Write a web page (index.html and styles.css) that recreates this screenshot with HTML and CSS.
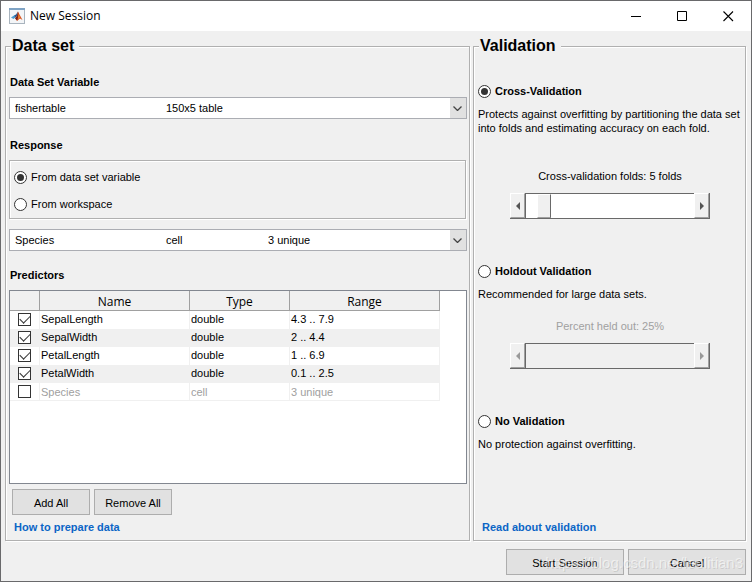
FILE: index.html
```
<!DOCTYPE html>
<html lang="en">
<head>
    <meta charset="UTF-8">
    <meta name="viewport" content="width=device-width, initial-scale=1.0">
    <title>New Session</title>
    <link rel="stylesheet" href="styles.css">
</head>
<body>
    <div class="window">
        <header class="titlebar">
            <svg class="logo" width="16" height="16" viewBox="0 0 16 16">
                <rect x="0.5" y="0.5" width="15" height="15" fill="#f3f5f7" stroke="#a9b4be"/>
                <rect x="0" y="0" width="16" height="2" fill="#7fa3c4"/>
                <path d="M2 9.5 L5 7.5 L7 9 L4.5 11 Z" fill="#4a9bd0"/>
                <path d="M5 7.5 L7 6.5 L9 3.5 L8 8 L6.5 9.5 Z" fill="#2a5b93"/>
                <path d="M9 3.5 L10.5 6.5 L13.5 12 L11 10.5 L8 13 L6.5 10 L8 8 Z" fill="#d9541e"/>
                <path d="M9 3.5 L8 8 L6 10.5 L8 12.5 L9.5 8 Z" fill="#7c2118"/>
                <path d="M9.5 6 L11 9.5 L9 11 Z" fill="#f08a2c"/>
            </svg>
            <h1>New Session</h1>
            <div class="window-btns">
                <button aria-label="Minimize"><svg width="11" height="11" viewBox="0 0 11 11"><path d="M0 5.5 H10" stroke="#000"/></svg></button>
                <button aria-label="Maximize"><svg width="11" height="11" viewBox="0 0 11 11"><path d="M0.5 0.5 H9.5 V9.5 H0.5 Z" fill="none" stroke="#000"/></svg></button>
                <button aria-label="Close"><svg width="11" height="11" viewBox="0 0 11 11"><path d="M0.5 0.5 L10 10 M10 0.5 L0.5 10" stroke="#000" stroke-width="1.1"/></svg></button>
            </div>
        </header>

        <main class="panels">
            <fieldset class="panel data-panel">
                <legend>Data set</legend>

                <label class="heading" for="variable">Data Set Variable</label>
                <div class="combo">
                    <select id="variable">
                        <option>fishertable</option>
                    </select>
                    <span class="combo-type">150x5 table</span>
                    <svg class="arrow" width="9" height="5" viewBox="0 0 9 5"><path d="M0.5 0.5 L4.5 4.5 L8.5 0.5" fill="none" stroke="#444" stroke-width="1.3"/></svg>
                </div>

                <label class="heading" for="response">Response</label>
                <div class="group">
                    <label><input type="radio" name="source" checked>From data set variable</label>
                    <label><input type="radio" name="source">From workspace</label>
                </div>
                <div class="combo">
                    <select id="response">
                        <option>Species</option>
                    </select>
                    <span class="combo-type">cell</span>
                    <span class="combo-range">3 unique</span>
                    <svg class="arrow" width="9" height="5" viewBox="0 0 9 5"><path d="M0.5 0.5 L4.5 4.5 L8.5 0.5" fill="none" stroke="#444" stroke-width="1.3"/></svg>
                </div>

                <h3 class="heading">Predictors</h3>
                <div class="table-box">
                    <table>
                        <thead>
                            <tr><th class="col-check"></th><th class="col-name">Name</th><th class="col-type">Type</th><th class="col-range">Range</th></tr>
                        </thead>
                        <tbody>
                            <tr><td><input type="checkbox" id="p1" checked></td><td><label for="p1">SepalLength</label></td><td>double</td><td>4.3 .. 7.9</td></tr>
                            <tr><td><input type="checkbox" id="p2" checked></td><td><label for="p2">SepalWidth</label></td><td>double</td><td>2 .. 4.4</td></tr>
                            <tr><td><input type="checkbox" id="p3" checked></td><td><label for="p3">PetalLength</label></td><td>double</td><td>1 .. 6.9</td></tr>
                            <tr><td><input type="checkbox" id="p4" checked></td><td><label for="p4">PetalWidth</label></td><td>double</td><td>0.1 .. 2.5</td></tr>
                            <tr class="off"><td><input type="checkbox" id="p5"></td><td><label for="p5">Species</label></td><td>cell</td><td>3 unique</td></tr>
                        </tbody>
                    </table>
                </div>
                <div class="btn-row">
                    <button class="btn">Add All</button>
                    <button class="btn">Remove All</button>
                </div>
                <a class="help" href="#">How to prepare data</a>
            </fieldset>

            <fieldset class="panel validation-panel">
                <legend>Validation</legend>

                <section class="method cross">
                    <label class="choice"><input type="radio" name="validation" checked>Cross-Validation</label>
                    <p>Protects against overfitting by partitioning the data set into folds and estimating accuracy on each fold.</p>
                    <label class="slider-label" for="folds">Cross-validation folds: 5 folds</label>
                    <div class="slider">
                        <button aria-label="Fewer folds"><svg width="4" height="8" viewBox="0 0 4 8"><path d="M4 0 V8 L0 4 Z" fill="#555"/></svg></button>
                        <input type="range" id="folds" min="2" max="45" value="5">
                        <button aria-label="More folds"><svg width="4" height="8" viewBox="0 0 4 8"><path d="M0 0 V8 L4 4 Z" fill="#555"/></svg></button>
                    </div>
                </section>

                <section class="method holdout">
                    <label class="choice"><input type="radio" name="validation">Holdout Validation</label>
                    <p>Recommended for large data sets.</p>
                    <label class="slider-label off" for="percent">Percent held out: 25%</label>
                    <div class="slider">
                        <button aria-label="Less" disabled><svg width="4" height="8" viewBox="0 0 4 8"><path d="M4 0 V8 L0 4 Z" fill="#999"/></svg></button>
                        <input type="range" id="percent" min="5" max="50" value="25" disabled>
                        <button aria-label="More" disabled><svg width="4" height="8" viewBox="0 0 4 8"><path d="M0 0 V8 L4 4 Z" fill="#999"/></svg></button>
                    </div>
                </section>

                <section class="method">
                    <label class="choice"><input type="radio" name="validation">No Validation</label>
                    <p>No protection against overfitting.</p>
                </section>

                <a class="help" href="#">Read about validation</a>
            </fieldset>
        </main>

        <footer>
            <button class="btn">Start Session</button>
            <button class="btn">Cancel</button>
            <span class="watermark">https://blog.csdn.net/leolitian3</span>
        </footer>
    </div>
</body>
</html>
```

FILE: styles.css
```
* {
    box-sizing: border-box;
}
body {
    margin: 0;
    font-family: "Liberation Sans", Arial, sans-serif;
    font-size: 11px;
    line-height: 14px;
    color: #000;
}
h1, h3, p {
    margin: 0;
}
button, select, input {
    font: inherit;
    color: inherit;
    margin: 0;
}
.window {
    display: flex;
    flex-direction: column;
    min-height: 100vh;
    border: 1px solid #69696b;
    background-color: #f0f0f0;
}

/* title bar */
.titlebar {
    display: flex;
    align-items: center;
    height: 30px;
    padding-left: 8px;
    background-color: #fff;
}
.titlebar h1 {
    margin-left: 5px;
    font: 12px/16px "Open Sans", sans-serif;
}
.window-btns {
    display: flex;
    margin-left: auto;
}
.window-btns button {
    display: flex;
    align-items: center;
    justify-content: center;
    width: 46px;
    height: 30px;
    padding: 0;
    border: none;
    background: none;
}

/* panels */
.panels {
    flex: 1;
    display: grid;
    grid-template-columns: 1fr 273px;
    gap: 3px;
    padding: 6px 5px 0 4px;
}
.panel {
    display: flex;
    flex-direction: column;
    min-width: 0;
    margin: 0;
    padding: 20px 2px 6px 3px;
    border: 1px solid #b0b0b0;
    box-shadow: 1px 1px 0 #fff, inset 1px 1px 0 #fff;
}
.panel legend {
    padding: 0 5px 0 1px;
    margin-left: 2px;
    font-size: 16px;
    font-weight: bold;
    line-height: 18px;
    background-color: #f0f0f0;
}
.heading {
    display: block;
    margin: 0 0 8px 1px;
    font-size: 11px;
    font-weight: bold;
}
.combo + label.heading {
    margin-top: 19px;
}
.combo + h3.heading {
    margin-top: 17px;
}

/* combo boxes */
.combo {
    display: grid;
    grid-template-columns: 157px 102px 1fr 17px;
    align-items: center;
    height: 22px;
}
.combo select {
    grid-area: 1 / 1 / 2 / -1;
    width: 100%;
    height: 22px;
    padding: 0 5px;
    appearance: none;
    border: 1px solid #abadb3;
    border-radius: 0;
    background: linear-gradient(#e1e1e1, #e1e1e1) right / 16px 100% no-repeat #fff;
}
.combo span, .arrow {
    grid-row: 1;
    z-index: 1;
    pointer-events: none;
}
.combo-type {
    grid-column: 2;
}
.combo-range {
    grid-column: 3;
}
.arrow {
    grid-column: 4;
    margin-left: 3px;
}

/* radios and check boxes */
input[type="radio"], input[type="checkbox"] {
    display: grid;
    place-content: center;
    flex: none;
    width: 13px;
    height: 13px;
    appearance: none;
    border: 1px solid #333;
    background-color: #fff;
}
input[type="radio"] {
    margin-right: 4px;
    border-radius: 50%;
}
input[type="radio"]:checked::before {
    content: "";
    width: 7px;
    height: 7px;
    border-radius: 50%;
    background-color: #333;
}
input[type="checkbox"]:checked::before {
    content: "";
    width: 9px;
    height: 5px;
    border: solid #333;
    border-width: 0 0 1px 1px;
    transform: translateY(-1px) rotate(-45deg);
}
.group {
    display: flex;
    flex-direction: column;
    gap: 13px;
    margin: 0 1px 10px 0;
    padding: 9px 4px 7px;
    border: 1px solid #b0b0b0;
    box-shadow: 1px 1px 0 #fff, inset 1px 1px 0 #fff;
}
.group label, .choice {
    display: flex;
    align-items: center;
}

/* predictors */
.table-box {
    flex: 1;
    border: 1px solid #828790;
    background-color: #fff;
}
table {
    width: 430px;
    table-layout: fixed;
    border-collapse: separate;
    border-spacing: 0;
}
th {
    height: 20px;
    padding: 2px 0 0;
    border-right: 1px solid #a0a0a0;
    border-bottom: 1px solid #a0a0a0;
    background-color: #f0f0f0;
    font: 12px/16px "Open Sans", sans-serif;
}
td {
    height: 18px;
    padding: 0 0 2px 1px;
    border-right: 1px solid #f0f0f0;
}
td input[type="checkbox"] {
    margin-left: 7px;
}
tbody tr:nth-child(even) {
    background-color: #f0f0f0;
}
.off {
    color: #a0a0a0;
}
.off td {
    padding-bottom: 0;
    border-bottom: 1px solid #f0f0f0;
}
.col-check {
    width: 30px;
}
.col-name, .col-range {
    width: 150px;
}
.col-type {
    width: 100px;
}

/* buttons and links */
.btn {
    height: 26px;
    padding: 2px 0 0;
    border: 1px solid #adadad;
    background-color: #e1e1e1;
}
.btn-row {
    display: flex;
    gap: 4px;
    margin: 5px 0 5px 3px;
}
.btn-row .btn {
    width: 78px;
}
.help {
    align-self: flex-start;
    margin-left: 5px;
    font-weight: bold;
    color: #0b65c6;
    text-decoration: none;
}

/* validation */
.validation-panel {
    padding-top: 29px;
}
.method {
    display: flex;
    flex-direction: column;
    padding: 0 1px;
}
.method p {
    margin-top: 9px;
}
.choice {
    font-weight: bold;
}
.cross, .holdout {
    margin-bottom: 45px;
}
.slider-label {
    align-self: center;
    margin: 34px 0 10px;
}
.holdout .slider-label {
    margin-top: 18px;
}
.slider {
    align-self: center;
    display: flex;
    width: 200px;
    height: 26px;
    border-right: 1px solid #696969;
    border-bottom: 1px solid #696969;
}
.slider button {
    display: flex;
    align-items: center;
    justify-content: center;
    width: 15px;
    padding: 0;
    border: 1px solid #fff;
    border-right-color: #a0a0a0;
    border-bottom-color: #a0a0a0;
    background-color: #f0f0f0;
}
.slider input {
    flex: 1;
    min-width: 0;
    height: 25px;
    appearance: none;
    border: solid #696969;
    border-width: 1px 0 0 1px;
    background-color: #fff;
}
.slider input::-webkit-slider-thumb {
    appearance: none;
    width: 14px;
    height: 24px;
    border: 1px solid #fff;
    border-right-color: #696969;
    border-bottom-color: #a0a0a0;
    background-color: #f0f0f0;
}
.slider input:disabled {
    background-color: #f0f0f0;
}
.slider input:disabled::-webkit-slider-thumb {
    visibility: hidden;
}
.validation-panel .help {
    margin-top: auto;
}

/* footer */
footer {
    position: relative;
    display: flex;
    justify-content: flex-end;
    gap: 4px;
    padding: 8px 5px 6px;
}
footer .btn {
    width: 118px;
}
.watermark {
    position: absolute;
    right: 8px;
    bottom: 8px;
    font-size: 15px;
    line-height: 20px;
    color: rgba(255, 255, 255, 0.5);
    text-shadow: 1px 1px 0 rgba(0, 0, 0, 0.1);
    pointer-events: none;
}
```
